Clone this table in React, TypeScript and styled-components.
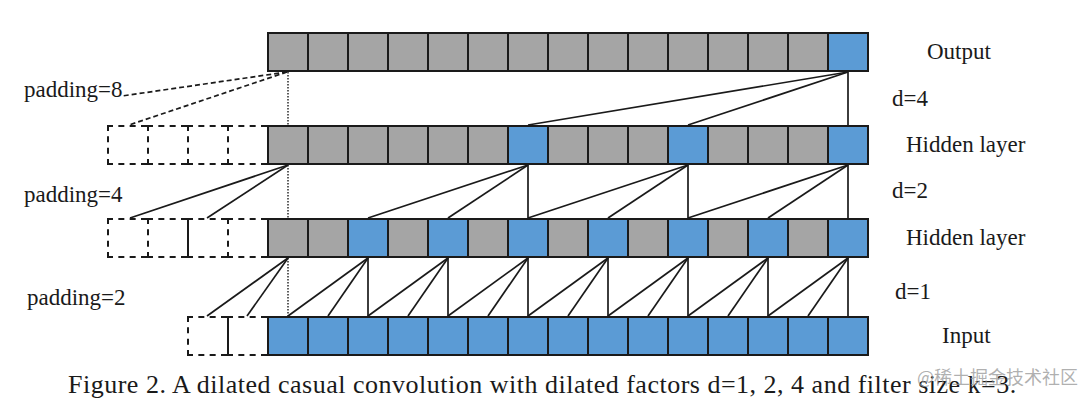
import React from 'react';
import styled, { createGlobalStyle } from 'styled-components';

const GlobalStyle = createGlobalStyle`
  html, body {
    margin: 0;
    padding: 0;
    background: #ffffff;
  }
  body {
    font-family: "Liberation Serif", "Times New Roman", serif;
    color: #1a1a1a;
  }
`;

const CELLS = 15;
const STRIP_LEFT = 268;
const CELL_W = 40;
const cx = (i: number) => STRIP_LEFT + 20 + i * CELL_W;

// row tops / bottoms in page pixels
const ROWS = { out: [32, 72], h1: [125, 165], h2: [218, 258], inp: [316, 356] };

const Page = styled.div`
  position: relative;
  width: 1080px;
  height: 400px;
  overflow: hidden;
  background: #fff;
`;

const Diagram = styled.div`
  position: relative;
  display: flex;
  flex-direction: column;
  padding-top: 32px;
`;

const LayerRow = styled.div`
  display: grid;
  grid-template-columns: 267px 602px 1fr;
  height: 40px;
  align-items: center;
`;

const GapRow = styled.div<{ $h: number }>`
  display: grid;
  grid-template-columns: 267px 602px 1fr;
  height: ${p => p.$h}px;
  align-items: start;
`;

const PadGroup = styled.div`
  display: flex;
  justify-content: flex-end;
  height: 40px;
`;

const PadCell = styled.div<{ $solidLeft?: boolean }>`
  box-sizing: border-box;
  width: 40px;
  height: 40px;
  border-top: 2px dashed #1a1a1a;
  border-bottom: 2px dashed #1a1a1a;
  border-left: 2px ${p => (p.$solidLeft ? 'solid' : 'dashed')} #1a1a1a;
`;

const Strip = styled.div`
  box-sizing: border-box;
  display: grid;
  grid-template-columns: repeat(${CELLS}, 1fr);
  gap: 2px;
  padding: 2px;
  height: 40px;
  background: #1a1a1a;
`;

const Cell = styled.div<{ $active: boolean }>`
  background: ${p => (p.$active ? '#5b9bd5' : '#a5a5a5')};
`;

const LayerLabel = styled.div<{ $indent: number }>`
  padding-left: ${p => p.$indent}px;
  font-size: 23px;
  line-height: 26px;
  white-space: nowrap;
`;

const PadLabel = styled.div<{ $left: number; $top: number }>`
  padding-left: ${p => p.$left}px;
  margin-top: ${p => p.$top}px;
  font-size: 23px;
  line-height: 26px;
  white-space: nowrap;
`;

const DilationLabel = styled.div<{ $left: number; $top: number }>`
  grid-column: 3;
  padding-left: ${p => p.$left}px;
  margin-top: ${p => p.$top}px;
  font-size: 23px;
  line-height: 26px;
`;

const Links = styled.svg`
  position: absolute;
  left: 0;
  top: 0;
  pointer-events: none;
`;

const Caption = styled.div`
  margin-top: 15px;
  padding-left: 68px;
  font-size: 26px;
  line-height: 28px;
  letter-spacing: 0.5px;
  white-space: nowrap;
`;

const Watermark = styled.div`
  position: absolute;
  left: 917px;
  top: 364px;
  font-family: "Noto Sans CJK SC", "Liberation Sans", sans-serif;
  font-size: 18px;
  line-height: 24px;
  color: rgba(150, 150, 150, 0.75);
  white-space: nowrap;
`;

const layer = (active: number[]) => Array.from({ length: CELLS }, (_, i) => active.includes(i));

const Layer: React.FC<{ active: number[]; pads: number; solidPad?: number; label: string; indent: number }> = ({
  active,
  pads,
  solidPad,
  label,
  indent,
}) => (
  <LayerRow>
    <PadGroup>
      {Array.from({ length: pads }, (_, i) => (
        <PadCell key={i} $solidLeft={i === solidPad} />
      ))}
    </PadGroup>
    <Strip>
      {layer(active).map((on, i) => (
        <Cell key={i} $active={on} />
      ))}
    </Strip>
    <LayerLabel $indent={indent}>{label}</LayerLabel>
  </LayerRow>
);

type Seg = [number, number, number, number];

const fan = (from: number, to: number, y1: number, y2: number, d: number): Seg[] =>
  [0, 1, 2].map(k => [cx(from), y1, cx(to - k * d), y2] as Seg);

const solid: Seg[] = [
  ...fan(14, 14, ROWS.out[1], ROWS.h1[0], 4),
  ...[6, 10, 14].flatMap(i => fan(i, i, ROWS.h1[1], ROWS.h2[0], 2)),
  ...[2, 4, 6, 8, 10, 12, 14].flatMap(i => fan(i, i, ROWS.h2[1], ROWS.inp[0], 1)),
  [cx(0), ROWS.h1[1], 130, ROWS.h2[0]],
  [cx(0), ROWS.h1[1], 207, ROWS.h2[0]],
  [cx(0), ROWS.h2[1], 207, ROWS.inp[0]],
  [cx(0), ROWS.h2[1], 247, ROWS.inp[0]],
];

const dashed: Seg[] = [
  [cx(0) - 1, ROWS.out[1], 122, 96],
  [cx(0) - 1, ROWS.out[1], 129, ROWS.h1[0]],
];

const dotted: Seg[] = [
  [cx(0), ROWS.out[1], cx(0), ROWS.h1[0]],
  [cx(0), ROWS.h1[1], cx(0), ROWS.h2[0]],
  [cx(0), ROWS.h2[1], cx(0), ROWS.inp[0]],
];

const App: React.FC = () => (
  <>
    <GlobalStyle />
    <Page>
      <Diagram>
        <Layer active={[14]} pads={0} label="Output" indent={58} />
        <GapRow $h={53}>
          <PadLabel $left={24} $top={5}>padding=8</PadLabel>
          <DilationLabel $left={23} $top={14}>d=4</DilationLabel>
        </GapRow>
        <Layer active={[6, 10, 14]} pads={4} label="Hidden layer" indent={37} />
        <GapRow $h={53}>
          <PadLabel $left={24} $top={17}>padding=4</PadLabel>
          <DilationLabel $left={23} $top={13}>d=2</DilationLabel>
        </GapRow>
        <Layer active={[2, 4, 6, 8, 10, 12, 14]} pads={4} solidPad={2} label="Hidden layer" indent={37} />
        <GapRow $h={58}>
          <PadLabel $left={27} $top={27}>padding=2</PadLabel>
          <DilationLabel $left={26} $top={21}>d=1</DilationLabel>
        </GapRow>
        <Layer active={Array.from({ length: CELLS }, (_, i) => i)} pads={2} solidPad={1} label="Input" indent={73} />
        <Caption>Figure 2. A dilated casual convolution with dilated factors d=1, 2, 4 and filter size k=3.</Caption>

        <Links width={1080} height={400} viewBox="0 0 1080 400">
          <g stroke="#1a1a1a" strokeWidth={1.7} fill="none">
            {solid.map(([x1, y1, x2, y2], i) => (
              <line key={`s${i}`} x1={x1} y1={y1} x2={x2} y2={y2} />
            ))}
          </g>
          <g stroke="#1a1a1a" strokeWidth={1.7} strokeDasharray="5 3" fill="none">
            {dashed.map(([x1, y1, x2, y2], i) => (
              <line key={`d${i}`} x1={x1} y1={y1} x2={x2} y2={y2} />
            ))}
          </g>
          <g stroke="#1a1a1a" strokeWidth={1.4} strokeDasharray="1.5 1.5" fill="none">
            {dotted.map(([x1, y1, x2, y2], i) => (
              <line key={`o${i}`} x1={x1} y1={y1} x2={x2} y2={y2} />
            ))}
          </g>
        </Links>
      </Diagram>
      <Watermark>@稀土掘金技术社区</Watermark>
    </Page>
  </>
);

export default App;
